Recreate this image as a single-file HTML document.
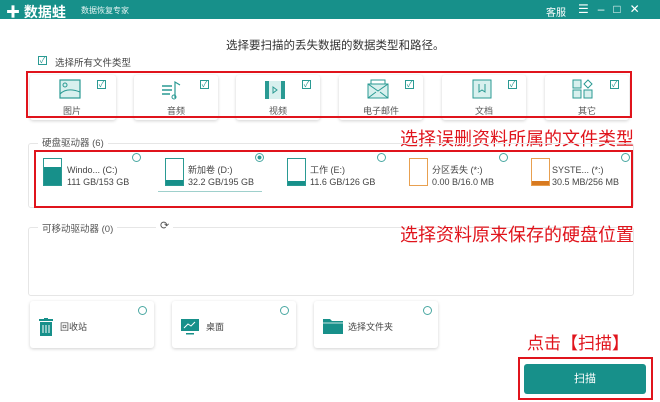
<!DOCTYPE html>
<html><head><meta charset="utf-8"><style>
*{margin:0;padding:0;box-sizing:border-box}
body{width:660px;height:402px;background:#fff;font-family:"Liberation Sans","Noto Sans CJK SC",sans-serif;position:relative;overflow:hidden;color:#444}
.a{position:absolute}
.tb{left:0;top:0;width:660px;height:19px;background:#17908a}
.card{position:absolute;background:#fff;border-radius:3px;box-shadow:0 1px 3px rgba(0,0,0,.18)}
.cb{position:absolute;width:9px;height:9px;border:1px solid #2a9a93;font-size:8px;line-height:7px;text-align:center;color:#2a9a93}
.lbl{position:absolute;font-size:9px;color:#555;width:84px;text-align:center}
.red{border:2px solid #e0141c}
.rt{color:#e0141c;font-size:18px;position:absolute;white-space:nowrap}
.rad{position:absolute;width:9px;height:9px;border:1px solid #4aa8a2;border-radius:50%}
.dt{position:absolute;font-size:9px;color:#444;line-height:12px;white-space:nowrap}
.di{position:absolute;width:19px;height:28px;border:1px solid #2a9a93;background:#fff}
.frame{position:absolute;border:1px solid #e6e6e6;border-radius:3px}
</style></head><body>
<div class="a tb"></div>
<div class="a" style="left:6px;top:2px;color:#fff;font-size:14px;font-weight:bold">✚ 数据蛙</div>
<div class="a" style="left:81px;top:5px;color:#e6f4f3;font-size:8px">数据恢复专家</div>
<div class="a" style="left:546px;top:4px;color:#fff;font-size:10px">客服</div>
<div class="a" style="left:578px;top:2px;color:#fff;font-size:12px;letter-spacing:9px">☰–□✕</div>

<div class="a" style="left:226px;top:37px;font-size:11.5px;color:#333">选择要扫描的丢失数据的数据类型和路径。</div>
<div class="cb" style="left:38px;top:56px">✓</div>
<div class="a" style="left:55px;top:55px;font-size:9.5px;color:#444">选择所有文件类型</div>

<div class="card" style="left:30px;top:75px;width:86px;height:45px"></div>
<div class="card" style="left:134px;top:75px;width:84px;height:45px"></div>
<div class="card" style="left:236px;top:75px;width:84px;height:45px"></div>
<div class="card" style="left:339px;top:75px;width:84px;height:45px"></div>
<div class="card" style="left:442px;top:75px;width:84px;height:45px"></div>
<div class="card" style="left:545px;top:75px;width:84px;height:45px"></div>
<div class="a red" style="left:26px;top:71px;width:606px;height:47px"></div>
<svg class="a" style="left:59px;top:79px" width="22" height="20"><rect x="1" y="1" width="20" height="18" fill="#d8f0ee" stroke="#2a9a93" stroke-width="1.2"/><circle cx="6" cy="6" r="2" fill="none" stroke="#2a9a93"/><path d="M1 15 Q8 8 21 13" fill="none" stroke="#2a9a93"/></svg>
<svg class="a" style="left:160px;top:80px" width="22" height="20"><path d="M2 6h10M2 10h10M2 14h8" stroke="#2a9a93" stroke-width="1.5"/><path d="M15 18V2l5 3" fill="none" stroke="#2a9a93" stroke-width="1.2"/><circle cx="14" cy="17" r="2" fill="none" stroke="#2a9a93"/></svg>
<svg class="a" style="left:264px;top:80px" width="22" height="20"><rect x="1" y="1" width="20" height="18" fill="#2a9a93"/><rect x="5" y="1" width="12" height="18" fill="#d8f0ee"/><path d="M9 7l4 3-4 3z" fill="none" stroke="#2a9a93"/></svg>
<svg class="a" style="left:367px;top:79px" width="22" height="20"><rect x="1" y="5" width="20" height="14" fill="#d8f0ee" stroke="#2a9a93"/><path d="M1 5l10 7 10-7M1 19l8-6M21 19l-8-6M4 5V1h14v4" fill="none" stroke="#2a9a93"/></svg>
<svg class="a" style="left:472px;top:79px" width="20" height="20"><rect x="1" y="1" width="18" height="18" fill="#d8f0ee" stroke="#2a9a93"/><path d="M7 5v8l3-2 3 2V5" fill="none" stroke="#2a9a93"/></svg>
<svg class="a" style="left:572px;top:79px" width="22" height="20"><rect x="1" y="1" width="8" height="8" fill="#d8f0ee" stroke="#2a9a93"/><path d="M16 1l4 4-4 4-4-4z" fill="none" stroke="#2a9a93"/><rect x="1" y="11" width="8" height="8" fill="#d8f0ee" stroke="#2a9a93"/><rect x="12" y="11" width="8" height="8" fill="#d8f0ee" stroke="#2a9a93"/></svg>
<div class="cb" style="left:97px;top:80px">✓</div>
<div class="cb" style="left:200px;top:80px">✓</div>
<div class="cb" style="left:302px;top:80px">✓</div>
<div class="cb" style="left:405px;top:80px">✓</div>
<div class="cb" style="left:508px;top:80px">✓</div>
<div class="cb" style="left:610px;top:80px">✓</div>
<div class="lbl" style="left:30px;top:104px">图片</div>
<div class="lbl" style="left:134px;top:104px">音频</div>
<div class="lbl" style="left:236px;top:104px">视频</div>
<div class="lbl" style="left:339px;top:104px">电子邮件</div>
<div class="lbl" style="left:442px;top:104px">文档</div>
<div class="lbl" style="left:545px;top:104px">其它</div>

<div class="rt" style="left:400px;top:125px">选择误删资料所属的文件类型</div>

<div class="frame" style="left:28px;top:143px;width:606px;height:65px"></div>
<div class="a" style="left:38px;top:135px;background:#fff;padding:0 4px;font-size:9.5px;color:#555">硬盘驱动器 (6)</div>
<div class="a red" style="left:34px;top:150px;width:599px;height:58px"></div>
<div class="di" style="left:43px;top:158px;background:linear-gradient(#fff 30%,#17908a 30%)"></div>
<div class="dt" style="left:67px;top:164px">Windo... (C:)<br>111 GB/153 GB</div>
<div class="rad" style="left:132px;top:153px"></div>
<div class="di" style="left:165px;top:158px;background:linear-gradient(#fff 80%,#17908a 80%)"></div>
<div class="dt" style="left:188px;top:164px">新加卷 (D:)<br>32.2 GB/195 GB</div>
<div class="rad" style="left:255px;top:153px;background:radial-gradient(#2a9a93 35%,#fff 45%)"></div>
<div class="a" style="left:158px;top:191px;width:104px;height:1px;background:#9fd0cc"></div>
<div class="di" style="left:287px;top:158px;background:linear-gradient(#fff 85%,#17908a 85%)"></div>
<div class="dt" style="left:310px;top:164px">工作 (E:)<br>11.6 GB/126 GB</div>
<div class="rad" style="left:377px;top:153px"></div>
<div class="di" style="left:409px;top:158px;border-color:#e8a050"></div>
<div class="dt" style="left:432px;top:164px">分区丢失 (*:)<br>0.00 B/16.0 MB</div>
<div class="rad" style="left:499px;top:153px"></div>
<div class="di" style="left:531px;top:158px;border-color:#e8a050;background:linear-gradient(#fff 85%,#d87a20 85%)"></div>
<div class="dt" style="left:552px;top:164px">SYSTE... (*:)<br>30.5 MB/256 MB</div>
<div class="rad" style="left:621px;top:153px"></div>

<div class="frame" style="left:28px;top:227px;width:606px;height:69px"></div>
<div class="a" style="left:38px;top:221px;background:#fff;padding:0 4px;font-size:9.5px;color:#555">可移动驱动器 (0)</div>
<div class="a" style="left:156px;top:219px;background:#fff;padding:0 4px;font-size:11px;color:#555">⟳</div>
<div class="rt" style="left:400px;top:221px">选择资料原来保存的硬盘位置</div>

<div class="card" style="left:30px;top:301px;width:124px;height:47px"></div>
<div class="card" style="left:172px;top:301px;width:124px;height:47px"></div>
<div class="card" style="left:314px;top:301px;width:124px;height:47px"></div>
<div class="rad" style="left:138px;top:306px"></div>
<div class="rad" style="left:280px;top:306px"></div>
<div class="rad" style="left:423px;top:306px"></div>
<svg class="a" style="left:39px;top:318px" width="14" height="18"><rect x="0" y="1" width="14" height="2" fill="#17908a"/><rect x="5" y="0" width="4" height="2" fill="#17908a"/><rect x="1" y="4" width="12" height="14" fill="#17908a"/><path d="M4 7v8M7 7v8M10 7v8" stroke="#fff"/></svg>
<div class="a" style="left:60px;top:320px;font-size:9px">回收站</div>
<svg class="a" style="left:181px;top:319px" width="18" height="16"><rect x="0" y="0" width="18" height="12" fill="#17908a"/><path d="M3 9l4-4 3 2 4-4" stroke="#fff" fill="none"/><rect x="5" y="14" width="8" height="1.5" fill="#17908a"/></svg>
<div class="a" style="left:206px;top:320px;font-size:9px">桌面</div>
<svg class="a" style="left:323px;top:318px" width="20" height="16"><path d="M0 1h7l2 2h11v13H0z" fill="#17908a"/><path d="M0 5h20" stroke="#fff" stroke-width=".7"/></svg>
<div class="a" style="left:348px;top:320px;font-size:9px">选择文件夹</div>

<div class="a" style="left:527px;top:329px;color:#e0141c;font-size:17px">点击【扫描】</div>
<div class="a red" style="left:518px;top:357px;width:135px;height:43px"></div>
<div class="a" style="left:524px;top:364px;width:122px;height:30px;background:#17908a;border-radius:3px;color:#fff;font-size:11px;text-align:center;line-height:30px">扫描</div>
</body></html>
